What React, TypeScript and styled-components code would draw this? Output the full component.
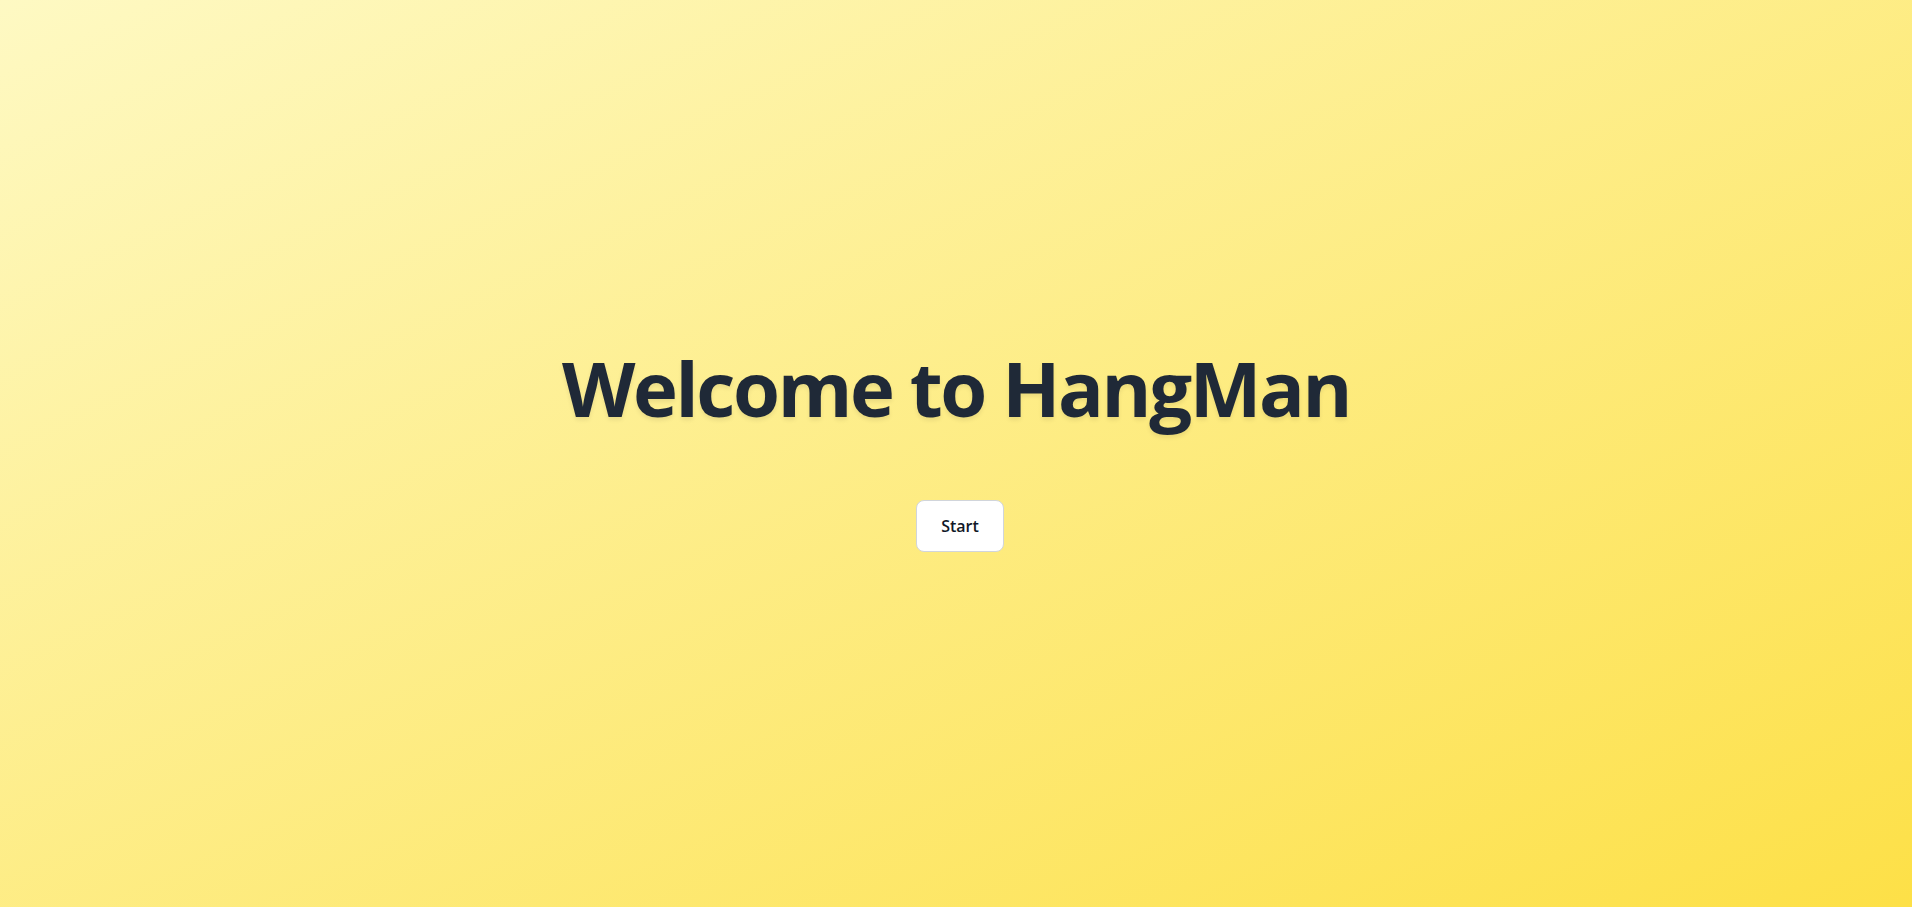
import React from "react";
import styled, { createGlobalStyle } from "styled-components";

const GlobalStyle = createGlobalStyle`
  html, body {
    margin: 0;
    padding: 0;
  }
  body {
    font-family: "Open Sans", "Noto Sans", "Liberation Sans", sans-serif;
  }
  * { box-sizing: border-box; }
`;

const Page = styled.main`
  min-height: 100vh;
  padding-bottom: 6px;
  display: flex;
  flex-direction: column;
  align-items: center;
  justify-content: center;
  background: linear-gradient(to bottom right, #fef9c3, #fde047);
`;

const Title = styled.h1`
  margin: 0 0 74px;
  font-size: 76px;
  line-height: 1;
  font-weight: 700;
  color: #1f2937;
  letter-spacing: -2.4px;
  text-shadow: 0 3px 4px rgba(0, 0, 0, 0.08);
`;

const StartButton = styled.button`
  margin-left: 8px;
  font-family: "Open Sans", "Noto Sans", sans-serif;
  font-size: 16px;
  font-weight: 600;
  color: #111827;
  background: #ffffff;
  border: 1px solid #d1d5db;
  border-radius: 8px;
  padding: 13px 24.5px;
  line-height: 24px;
  cursor: pointer;
`;

export default function App() {
  return (
    <>
      <GlobalStyle />
      <Page>
        <Title>Welcome to HangMan</Title>
        <StartButton>Start</StartButton>
      </Page>
    </>
  );
}
